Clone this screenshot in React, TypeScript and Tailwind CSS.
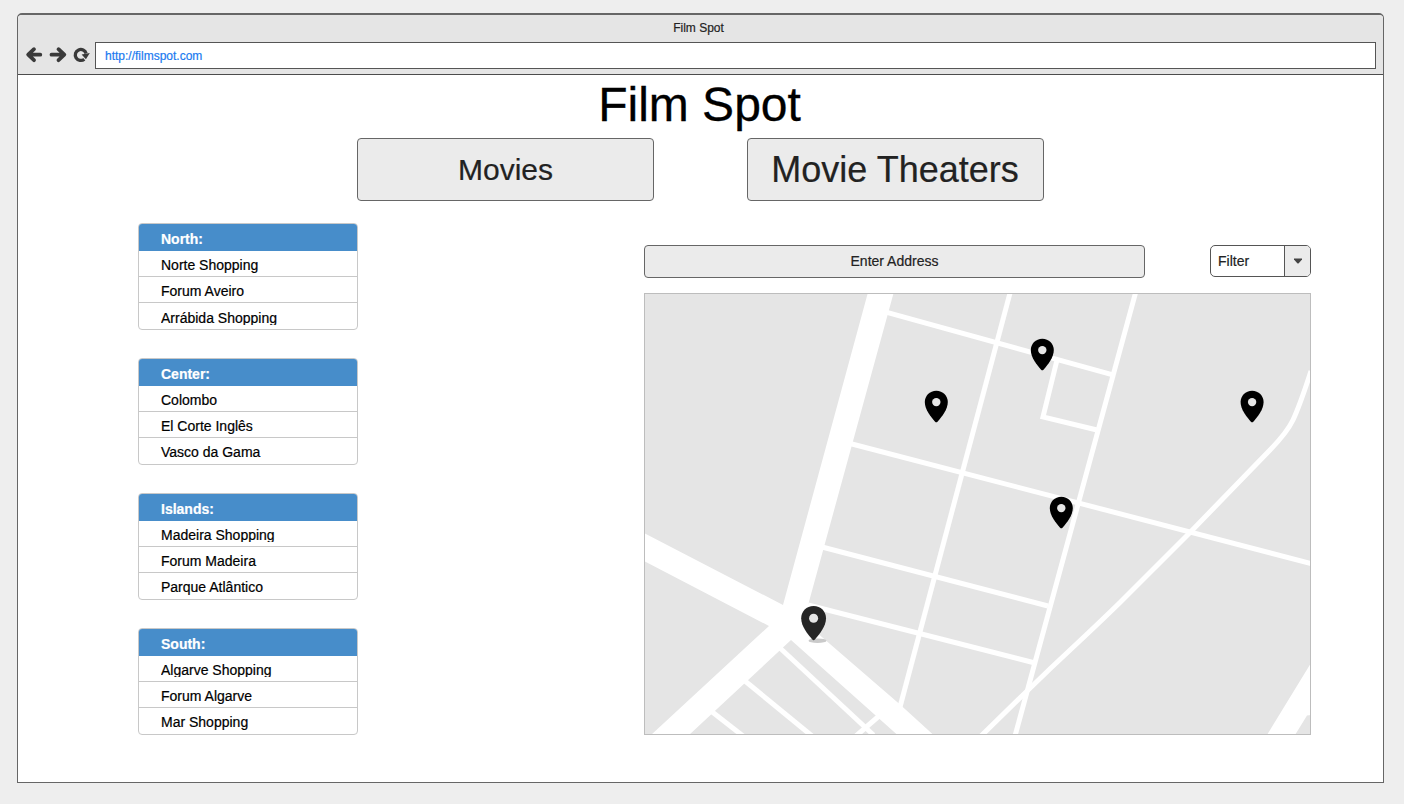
import React from "react";

const regions = [
  { name: "North:", places: ["Norte Shopping", "Forum Aveiro", "Arrábida Shopping"], clipped: 2 },
  { name: "Center:", places: ["Colombo", "El Corte Inglês", "Vasco da Gama"], clipped: -1 },
  { name: "Islands:", places: ["Madeira Shopping", "Forum Madeira", "Parque Atlântico"], clipped: 0 },
  { name: "South:", places: ["Algarve Shopping", "Forum Algarve", "Mar Shopping"], clipped: 0 },
];

const pins = [
  [1042.3, 338.7],
  [936.3, 390.7],
  [1252.1, 390.7],
  [1061.3, 496.7],
];

function Pin({ x, y, scale = 1, color = "#000" }: { x: number; y: number; scale?: number; color?: string }) {
  return (
    <g transform={`translate(${x} ${y}) scale(${scale})`}>
      <path
        d="M0 0C-6.6 0-11.5 5-11.5 11.4C-11.5 18.8-5.6 26-1.2 31.1Q0 32.2 1.2 31.1C5.6 26 11.5 18.8 11.5 11.4C11.5 5 6.6 0 0 0Z"
        fill={color}
      />
      <circle cx="0" cy="11.4" r="4.2" fill="#e5e5e5" />
    </g>
  );
}

function CityMap() {
  return (
    <svg className="block h-[442px] w-[667px]" viewBox="644 293 667 442" fill="none">
      <rect x="644" y="293" width="667" height="442" fill="#e5e5e5" />
      <g stroke="#fff" strokeWidth="5">
        <path d="M886 312.200L1112 374.700" />
        <path d="M850 443.500L1311 563.500" />
        <path d="M822 547L1048 606" />
        <path d="M808 605L1033 662.500" />
        <path d="M1010.800 290L900 707" />
        <path d="M1136.300 290L1015 736" />
        <path d="M1057.500 358L1043 417L1097 430" />
        <path d="M980 737L1024 694Q1050 668.500 1077 643.500Q1100 622 1120 602.500L1190 532.500L1270 450Q1287 432.500 1293 420Q1300 405 1311 371" />
        <path d="M780 648L873.500 735" />
        <path d="M745 681L812 736" />
        <path d="M711 711L743 736" />
        <path d="M856 736L879 716" />
      </g>
      <g fill="#fff">
        <path d="M867.800 293L893.600 293L808.500 603.500L808 625L900 704.500L933.500 735H897.500L791 640L689 735H651L769 626L644 561V533L783 605Z" />
        <path d="M1311 663V715L1307 715.500L1295 735H1267Z" />
      </g>
      <rect x="644.5" y="293.500" width="666" height="441" stroke="#bdbdbd" />
      <ellipse cx="817.500" cy="640.700" rx="9" ry="2.300" fill="#cacaca" />
      {pins.map(([x, y]) => (
        <Pin key={`${x}-${y}`} x={x} y={y} />
      ))}
      <Pin x={813.600} y={606} scale={1.08} color="#252525" />
    </svg>
  );
}

function BrowserIcons() {
  return (
    <svg className="block h-5 w-[70px]" viewBox="25 45 70 20" fill="none" stroke="#3a3a3a" strokeWidth="3.800">
      <path d="M34 49.200L28.200 54.700L34 60.200M28.700 54.700H40.300" strokeLinecap="round" strokeLinejoin="round" />
      <path d="M58.500 49.200L64.300 54.700L58.500 60.200M63.800 54.700H51.500" strokeLinecap="round" strokeLinejoin="round" />
      <path d="M84.300 59.200A5.500 5.500 0 1 1 86.100 53.500" strokeWidth="3.300" />
      <path d="M81.600 54.500L89.800 52.900L85.900 59.200Z" fill="#3a3a3a" stroke="none" />
    </svg>
  );
}

export default function App() {
  return (
    <div className="h-[804px] w-[1404px] overflow-hidden bg-[#eeeeee] pt-[13px] pl-[17px] font-['Liberation_Sans',Arial,sans-serif] text-black [-webkit-text-stroke:0.2px]">
      <div className="flex h-[770px] w-[1367px] flex-col rounded-t-[5px] border-[1.5px] border-t-2 border-[#666] bg-white">
        <header className="h-[60px] shrink-0 rounded-t-[4px] border-b border-[#4c4c4c] bg-[#e5e5e5]">
          <div className="h-[27px] pt-[4px] pr-[4px] text-center text-[12px] leading-[18px] text-[#222]">Film Spot</div>
          <div className="flex pl-[7px]">
            <div className="pt-[3px]">
              <BrowserIcons />
            </div>
            <div className="flex h-[27px] w-[1281px] items-center border border-[#555] bg-white pl-[9px] pt-px text-[12px] text-[#1a7af0]">
              http://filmspot.com
            </div>
          </div>
        </header>

        <h1 className="h-[63px] shrink-0 pt-px pr-[2px] text-center text-[48px] leading-[58px] [-webkit-text-stroke:0.3px]">Film Spot</h1>

        <nav className="flex h-[63px] shrink-0 gap-[93px] pl-[339px] text-[#222]">
          <button className="h-[63px] w-[297px] rounded-[4px] border border-[#666] bg-[#ebebeb] text-[30px]">Movies</button>
          <button className="h-[63px] w-[297px] rounded-[4px] border border-[#666] bg-[#ebebeb] pr-px text-[36px]">Movie Theaters</button>
        </nav>

        <main className="flex pl-[120px] pt-[22px]">
          <div className="flex w-[220px] flex-col gap-[28px]">
            {regions.map((region) => (
              <section key={region.name} className="h-[107px] overflow-hidden rounded-[4px] border border-[#c8c8c8] bg-white text-[14px]">
                <h2 className="-mx-px -mt-px h-7 bg-[#478dca] pl-[23px] font-bold leading-[32px] text-white">{region.name}</h2>
                {region.places.map((place, i) => (
                  <div key={place} className={i < 2 ? "h-[26px] border-b border-[#c8c8c8] pl-[22px]" : "h-[27px] pl-[22px]"}>
                    <span
                      className={
                        i === region.clipped
                          ? i === 2
                            ? "block h-[22px] overflow-hidden leading-[30px]"
                            : "block h-[21px] overflow-hidden leading-[28px]"
                          : "block leading-[28px]"
                      }
                    >
                      {place}
                    </span>
                  </div>
                ))}
              </section>
            ))}
          </div>

          <div className="ml-[286px] w-[667px] pt-[22px]">
            <div className="flex justify-between text-[14px] text-[#222]">
              <div className="flex h-[33px] w-[501px] items-center justify-center rounded-[4px] border border-[#666] bg-[#ebebeb]">
                Enter Address
              </div>
              <button className="flex h-8 w-[101px] overflow-hidden rounded-[5px] border border-[#555] bg-white text-left">
                <span className="grow pl-[7px] leading-[31px]">Filter</span>
                <span className="flex h-full w-[26px] items-center justify-center border-l border-[#555] bg-[#ebebeb]">
                  <svg className="h-[6px] w-[8px]" viewBox="0 0 8 6">
                    <path d="M0 .5H8V1.500L4.700 5.200Q4 5.800 3.300 5.200L0 1.500Z" fill="#444" />
                  </svg>
                </span>
              </button>
            </div>
            <div className="mt-[15px]">
              <CityMap />
            </div>
          </div>
        </main>
      </div>
    </div>
  );
}
